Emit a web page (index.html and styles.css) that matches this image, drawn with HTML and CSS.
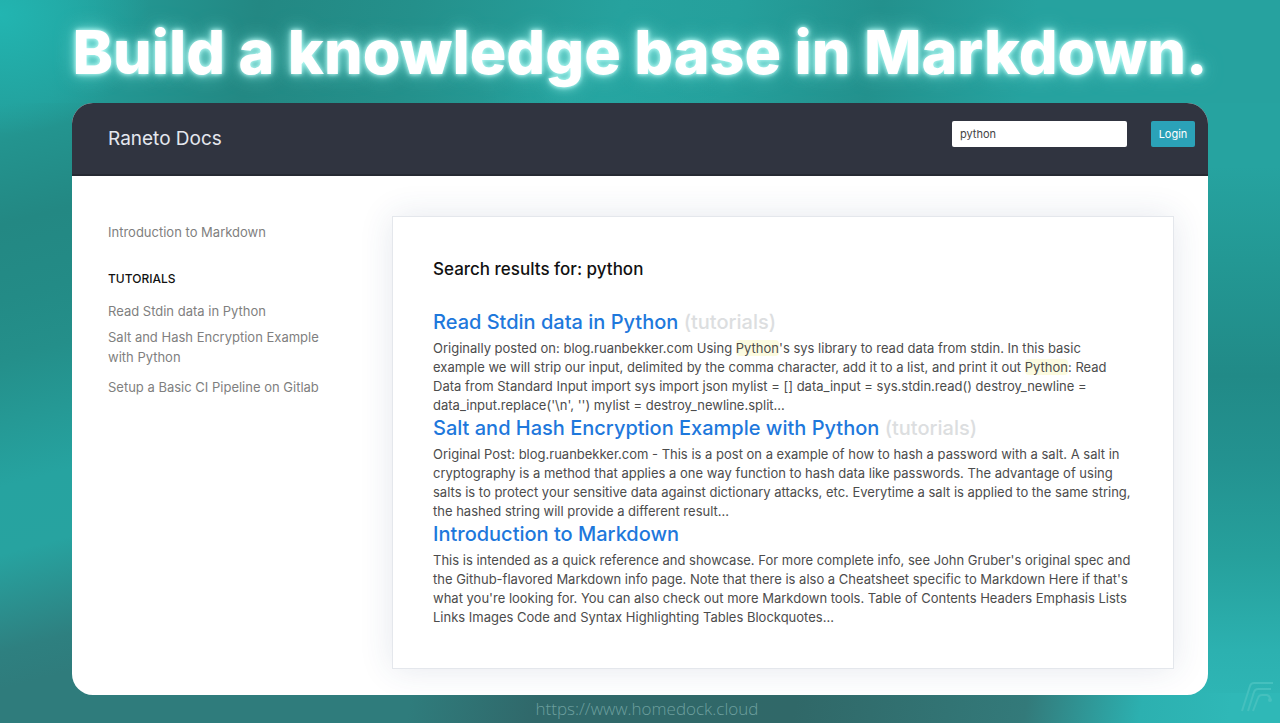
FILE: index.html
```html
<!DOCTYPE html>
<html lang="en">
<head>
<meta charset="utf-8">
<meta name="viewport" content="width=device-width, initial-scale=1">
<title>Raneto Docs</title>
<link rel="stylesheet" href="styles.css">
</head>
<body>
<div class="stage">
  <h1 class="headline">Build a knowledge base in Markdown.</h1>
  <div class="window">
    <header class="topbar">
      <a class="brand" href="#">Raneto Docs</a>
      <form class="tools">
        <input class="search" type="text" aria-label="Search" value="python">
        <button class="login" type="button">Login</button>
      </form>
    </header>
    <div class="body">
      <nav class="sidebar" aria-label="Pages">
        <a class="nav-link" href="#">Introduction to Markdown</a>
        <h2 class="nav-title">TUTORIALS</h2>
        <ul class="nav-list">
          <li><a class="nav-link" href="#">Read Stdin data in Python</a></li>
          <li><a class="nav-link wraps" href="#">Salt and Hash Encryption Example with Python</a></li>
          <li><a class="nav-link" href="#">Setup a Basic CI Pipeline on Gitlab</a></li>
        </ul>
      </nav>
      <main class="results">
        <h2 class="results-title">Search results for: python</h2>
        <article>
          <h3 class="result-title"><a href="#">Read Stdin data in Python</a> <span class="category">(tutorials)</span></h3>
          <p class="excerpt">Originally posted on: blog.ruanbekker.com Using <mark>Python</mark>'s sys library to read data from stdin. In this basic<br>example we will strip our input, delimited by the comma character, add it to a list, and print it out <mark>Python</mark>: Read<br>Data from Standard Input import sys import json mylist = [] data_input = sys.stdin.read() destroy_newline =<br>data_input.replace('\n', '') mylist = destroy_newline.split...</p>
        </article>
        <article>
          <h3 class="result-title"><a href="#">Salt and Hash Encryption Example with Python</a> <span class="category">(tutorials)</span></h3>
          <p class="excerpt">Original Post: blog.ruanbekker.com - This is a post on a example of how to hash a password with a salt. A salt in<br>cryptography is a method that applies a one way function to hash data like passwords. The advantage of using<br>salts is to protect your sensitive data against dictionary attacks, etc. Everytime a salt is applied to the same string,<br>the hashed string will provide a different result...</p>
        </article>
        <article>
          <h3 class="result-title"><a href="#">Introduction to Markdown</a></h3>
          <p class="excerpt">This is intended as a quick reference and showcase. For more complete info, see John Gruber's original spec and<br>the Github-flavored Markdown info page. Note that there is also a Cheatsheet specific to Markdown Here if that's<br>what you're looking for. You can also check out more Markdown tools. Table of Contents Headers Emphasis Lists<br>Links Images Code and Syntax Highlighting Tables Blockquotes...</p>
        </article>
      </main>
    </div>
  </div>
  <footer class="credit">
    <a href="#">https://www.homedock.cloud</a>
    <svg class="mark" viewBox="0 0 34 32" width="34" height="32" aria-hidden="true">
      <g fill="none" stroke="currentColor" stroke-width="2">
        <path d="M2 30 10 5Q11 2 14 2H33"/>
        <path d="M8 30 14 11Q15 8 18 8H31"/>
        <path d="M13 30 18 17Q19 14 22 14H27Q30 15 30 18"/>
      </g>
      <circle cx="30" cy="19" r="2" fill="currentColor"/>
    </svg>
  </footer>
</div>
</body>
</html>
```
FILE: styles.css
```css
* { box-sizing: border-box; }

body {
  margin: 0;
  font-family: Inter, "Liberation Sans", sans-serif;
}

a { color: inherit; text-decoration: none; }

.stage {
  min-height: 100vh;
  display: flex;
  flex-direction: column;
  padding: 0 72px;
  background:
    radial-gradient(ellipse 150px 120px at 0% 2%, #22b5b1, transparent),
    radial-gradient(ellipse 120px 80px at 47% 14%, #26a5a1, transparent),
    linear-gradient(100deg, #2f7c7c 32%, #30686a 42%, #306868 62%, #337a7a 80%, #2cb0b0 89%, #2fb8b7 96%) bottom / 100% 30px no-repeat,
    linear-gradient(100deg, #239e9a 5%, #238883 20%, #24908b 32%, #26a29e 48%, #25a09c 57%, #23918d 68%, #26a29f 80%) top / 100% 103px no-repeat,
    linear-gradient(165deg, #239e9a 14%, #23948f 19%, #238883 30%, #238b86 40%, #248f8a 48%, #26a3a0 65%, #27a3a0 74%, #2e8080 87%, #2f7c7c 92%) left / 100px 100% no-repeat,
    linear-gradient(#26a3a0 23%, #239894 36%, #218a87 52%, #239290 64%, #26a09c 77%, #2cb1b0 90%, #2fb8b7) right / 50% 100% no-repeat,
    #24a09d;
}

.headline {
  margin: 0;
  padding-top: 14px;
  height: 103px;
  font-size: 61px;
  line-height: 76px;
  font-weight: 800;
  text-align: center;
  white-space: nowrap;
  color: #fff;
  text-shadow: 0 0 4px #c4fffa, 0 0 10px #9ff5eecc, 0 0 20px #8ff0ea99;
}

.window {
  flex: 1;
  display: flex;
  flex-direction: column;
  border-radius: 21px;
  overflow: hidden;
  background: #fff;
}

.topbar {
  display: flex;
  justify-content: space-between;
  align-items: flex-start;
  padding: 18px 13px 17px 36px;
  background: #303440;
  border-bottom: 2px solid #262a33;
}

.brand {
  font-size: 19px;
  line-height: 36px;
  color: #e4e7ee;
}

.tools { display: flex; gap: 24px; }

.search,
.login {
  height: 26px;
  border: 0;
  border-radius: 2px;
  padding: 0 8px;
  font: 11px/24px Inter, "Liberation Sans", sans-serif;
}

.search { width: 175px; background: #fff; color: #444; }

.login { width: 44px; padding: 0; background: #2ba2b8; color: #fff; }

.body {
  flex: 1;
  display: grid;
  grid-template-columns: 284px 1fr;
  align-items: start;
  padding: 40px 34px 26px 36px;
}

.sidebar { padding-top: 6px; }

.nav-link {
  display: block;
  font-size: 13px;
  line-height: 20px;
  color: #7f7f7f;
}

.nav-title {
  margin: 28px 0 13px;
  font-size: 12px;
  line-height: 18px;
  font-weight: 500;
  color: #111;
}

.nav-list {
  max-width: 224px;
  margin: 0;
  padding: 0;
  list-style: none;
  display: grid;
  gap: 6px;
}

.wraps { padding-bottom: 4px; }

.results {
  padding: 38px 40px 41px;
  border: 1px solid #e4e7ec;
  background: #fff;
  box-shadow: 0 0 32px #2a40701f;
}

.results-title {
  margin: 0 0 26px;
  font-size: 17px;
  line-height: 28px;
  font-weight: 500;
  color: #111;
}

.result-title {
  margin: 0 0 4px;
  font-size: 20px;
  line-height: 26px;
  font-weight: 500;
  color: #1e78dc;
}

.category { color: #dcdee0; }

.excerpt {
  margin: 0;
  font-size: 13px;
  line-height: 19px;
  color: #4c4c4c;
  white-space: nowrap;
}

mark { background: #fcfbe0; color: inherit; border-radius: 4px; }

.credit {
  position: relative;
  height: 28px;
  padding-left: 14px;
  text-align: center;
  font: 300 17px/28px "Open Sans", "Noto Sans", sans-serif;
  color: #6d9f9e;
}

.mark {
  position: absolute;
  right: -66px;
  bottom: 10px;
  color: #45c0be;
}
```
